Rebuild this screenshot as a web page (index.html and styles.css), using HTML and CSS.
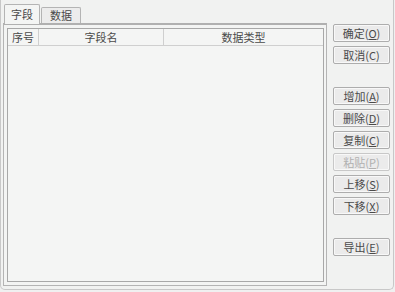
FILE: index.html
```html
<!DOCTYPE html>
<html lang="zh">
<head>
<meta charset="UTF-8">
<title>字段</title>
<link rel="stylesheet" href="styles.css">
</head>
<body>
<div class="dialog">
    <div class="left">
        <div class="tabs">
            <div class="tab active">字段</div>
            <div class="tab">数据</div>
        </div>
        <div class="pane">
            <div class="list">
                <div class="head">
                    <div class="col c1">序号</div>
                    <div class="col c2">字段名</div>
                    <div class="col c3">数据类型</div>
                </div>
            </div>
        </div>
    </div>
    <div class="buttons">
        <button class="btn">确定(<u>O</u>)</button>
        <button class="btn">取消(C)</button>
        <div class="space"></div>
        <button class="btn">增加(<u>A</u>)</button>
        <button class="btn">删除(<u>D</u>)</button>
        <button class="btn">复制(<u>C</u>)</button>
        <button class="btn off">粘贴(<u>P</u>)</button>
        <button class="btn">上移(<u>S</u>)</button>
        <button class="btn">下移(<u>X</u>)</button>
        <div class="space"></div>
        <button class="btn">导出(<u>E</u>)</button>
    </div>
</div>
</body>
</html>
```

FILE: styles.css
```css
html, body {
    margin: 0;
    padding: 0;
    background: #f0f0f0;
}
body {
    width: 395px;
    height: 292px;
    font-family: "Noto Sans CJK SC", "Liberation Sans", sans-serif;
    font-size: 11px;
    color: #4a4a4a;
}
.dialog {
    box-sizing: border-box;
    width: 394px;
    height: 290px;
    border: 1px solid #c8c8c8;
    border-top: none;
    border-radius: 0 0 5px 5px;
    padding: 4px 0 0 2px;
    display: flex;
    background: #f1f2f1;
}
.left {
    width: 324px;
    display: flex;
    flex-direction: column;
}
.tabs {
    display: flex;
    height: 19px;
    align-items: flex-end;
    padding-left: 1px;
}
.tab {
    box-sizing: border-box;
    height: 16px;
    line-height: 14px;
    padding: 0 8px;
    border: 1px solid #b4b4b4;
    border-bottom: none;
    border-radius: 2px 2px 0 0;
    background: #ececec;
    margin-right: 1px;
}
.tab.active {
    height: 20px;
    line-height: 18px;
    width: 36px;
    padding: 0;
    text-align: center;
    background: #f4f5f4;
    margin-bottom: -1px;
    position: relative;
    z-index: 1;
}
.pane {
    flex: 1;
    border: 1px solid #b4b4b4;
    border-top: 2px solid #b0b0b0;
    margin-bottom: 3px;
    padding: 3px 2px 3px 3px;
    display: flex;
    background: #f3f4f3;
}
.list {
    flex: 1;
    border: 1px solid #a8a8a8;
    background: #f4f5f4;
}
.head {
    display: flex;
    height: 16px;
    border-bottom: 1px solid #cfcfcf;
}
.col {
    text-align: center;
    line-height: 16px;
    border-right: 1px solid #cfcfcf;
}
.c1 { width: 30px; }
.c2 { width: 124px; }
.c3 { flex: 1; border-right: none; }
.buttons {
    display: flex;
    flex-direction: column;
    margin-left: 6px;
    padding-top: 20px;
}
.btn {
    box-sizing: border-box;
    width: 57px;
    height: 18px;
    margin-bottom: 4px;
    padding: 0;
    border: 1px solid #adadad;
    border-radius: 2px;
    background: #ebebeb;
    box-shadow: inset 0 0 0 1px #f8f8f8;
    font-family: inherit;
    font-size: 11px;
    line-height: 14px;
    color: #4a4a4a;
}
.btn.off {
    color: #b0b0b0;
    border-color: #c8c8c8;
}
.space {
    height: 19px;
}
```
